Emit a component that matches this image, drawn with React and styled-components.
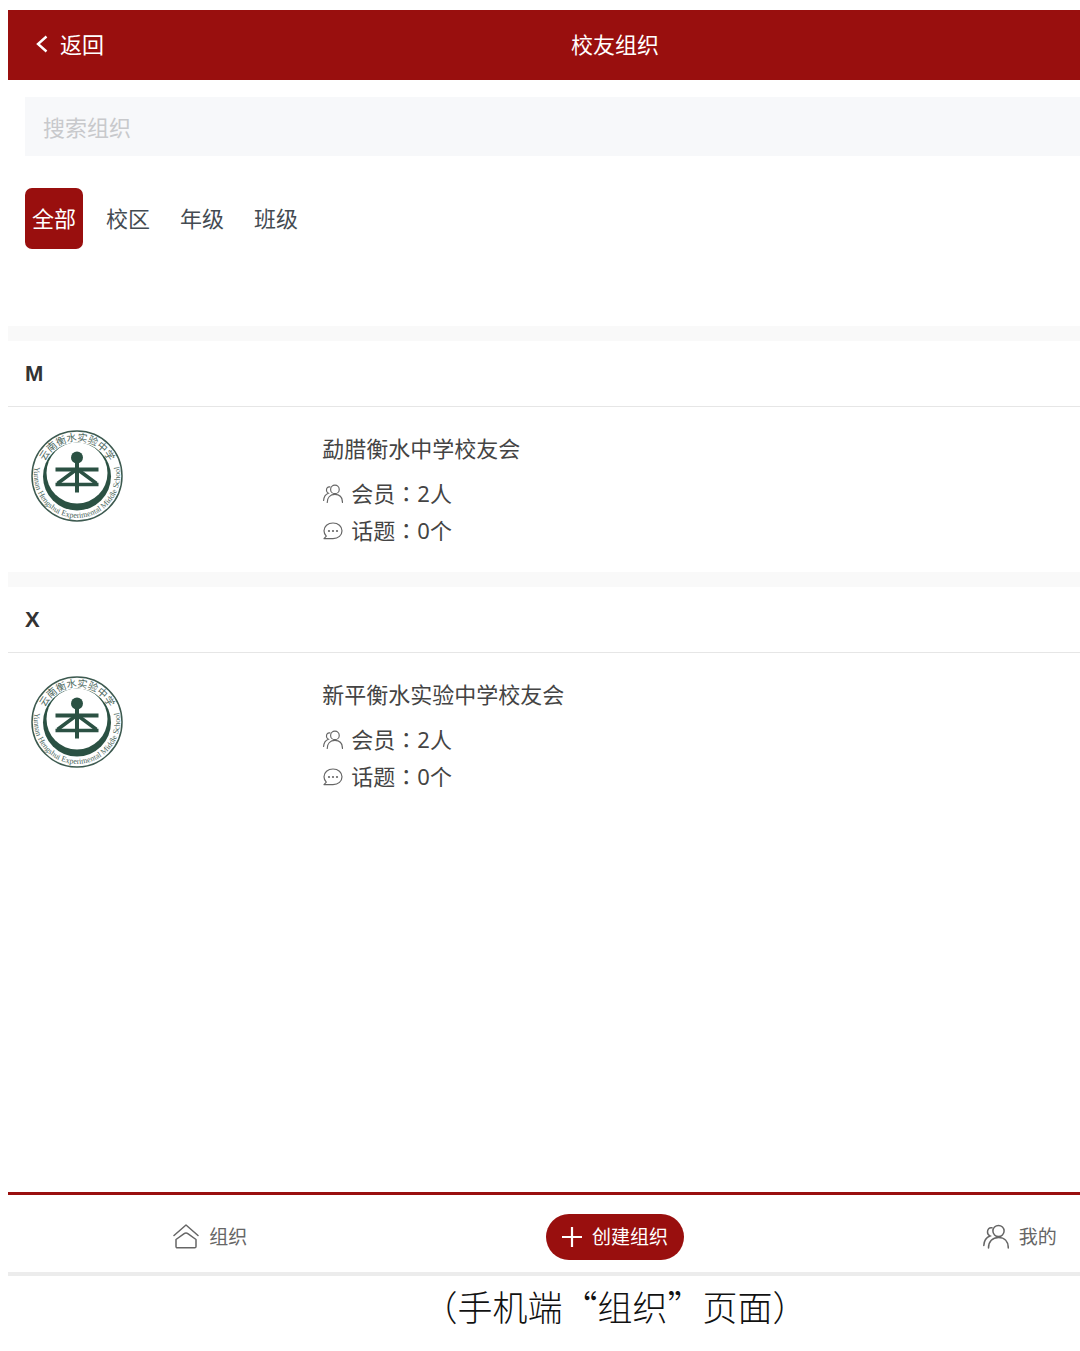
import React, { useState } from "react";
import styled, { createGlobalStyle } from "styled-components";

const GlobalStyle = createGlobalStyle`
  * {
    box-sizing: border-box;
  }
  body {
    margin: 0;
    background: #fff;
    color: #444;
    font-family: "Noto Sans", "Noto Sans CJK SC", sans-serif;
    font-size: 22px;
    line-height: 30px;
  }
  button, input {
    font: inherit;
  }
`;

const Page = styled.div`
  min-height: 100vh;
  padding-top: 10px;
  overflow: hidden;
  display: flex;
  flex-direction: column;
`;

/* the phone screen runs past the right edge of the window */
const Screen = styled.div`
  flex: 1;
  margin: 0 -142px 0 8px;
  display: flex;
  flex-direction: column;
`;

const Header = styled.header`
  height: 70px;
  padding: 0 28px 2px;
  background: #990f0e;
  color: #fff;
  display: grid;
  grid-template-columns: 1fr auto 1fr;
  align-items: center;
`;

const Back = styled.a`
  color: inherit;
  text-decoration: none;
  display: flex;
  align-items: center;
  gap: 12px;
`;

const Title = styled.h1`
  margin: 0;
  font-size: 22px;
  font-weight: 400;
`;

const Search = styled.input`
  height: 59px;
  margin: 17px 17px 0;
  padding: 0 18px;
  border: none;
  background: #f7f8fa;
  color: #444;
  &::placeholder {
    color: #c8c9cc;
    opacity: 1;
  }
`;

const Tabs = styled.div`
  display: flex;
  gap: 16px;
  padding: 32px 17px 77px;
`;

const Tab = styled.button`
  height: 61px;
  padding: 0 7px 2px;
  border: none;
  border-radius: 7px;
  background: ${({ $active }) => ($active ? "#990f0e" : "transparent")};
  color: ${({ $active }) => ($active ? "#fff" : "#444b52")};
  cursor: pointer;
`;

const Group = styled.section`
  border-top: 15px solid #f9f9f9;
`;

const Letter = styled.h2`
  height: 66px;
  margin: 0;
  padding: 0 17px;
  border-bottom: 1px solid #e6e6e6;
  font-family: "Liberation Sans", sans-serif;
  font-size: 22px;
  font-weight: 700;
  line-height: 66px;
  color: #333;
`;

const Item = styled.article`
  height: 165px;
  padding: 23px 8px 0 17px;
  display: grid;
  grid-template-columns: 1fr 3fr;
`;

const LogoCell = styled.div`
  padding-left: 6px;
`;

const Name = styled.h3`
  margin: 0 0 8px;
  font-size: 22px;
  font-weight: 400;
  line-height: 37px;
`;

const Stat = styled.p`
  margin: 0;
  line-height: 37px;
  display: flex;
  align-items: center;
  svg {
    margin: 0 8px 0 1px;
  }
`;

const Colon = styled.span`
  font-family: "Noto Sans", "Noto Sans CJK TC", sans-serif;
`;

const Nav = styled.nav`
  height: 84px;
  margin-top: auto;
  border-top: 3px solid #990f0e;
  border-bottom: 4px solid #ececec;
  display: grid;
  grid-template-columns: repeat(3, 1fr);
  place-items: center;
  padding-top: 6px;
  font-size: 19px;
`;

const NavLink = styled.a`
  color: #666;
  text-decoration: none;
  display: flex;
  align-items: center;
  gap: 10px;
`;

const Create = styled.button`
  height: 46px;
  padding: 0 16px;
  border: none;
  border-radius: 23px;
  background: #990f0e;
  color: #fff;
  display: flex;
  align-items: center;
  gap: 10px;
  cursor: pointer;
`;

const Caption = styled.p`
  margin: 0 -142px 0 8px;
  padding-bottom: 15px;
  color: #111;
  font-family: "Noto Sans CJK SC", sans-serif;
  font-size: 35px;
  font-weight: 300;
  line-height: 60px;
  text-align: center;
`;

const BackIcon = () => (
  <svg width="12" height="18" viewBox="0 0 12 18" fill="none" stroke="#fff" strokeWidth="2.4">
    <path d="M10.500 1.500 2 9l8.500 7.500" />
  </svg>
);

const PeopleIcon = ({ size, stroke }) => (
  <svg width={size} height={size} viewBox="0 0 26 26" fill="none" stroke="#666" strokeWidth={stroke} strokeLinecap="round">
    <circle cx="15.500" cy="7" r="5.600" />
    <path d="M5.500 24c0-6.500 4-10.500 10-10.500S25.300 17.500 25.300 24" />
    <path d="M9 3.800C6 3.300 4.500 5.300 4.500 8c0 2 1 3.300 2.500 4C3 13.500 1 17.500 .8 21.500" />
  </svg>
);

const ChatIcon = () => (
  <svg width="20" height="20" viewBox="0 0 20 20" fill="none" stroke="#666" strokeWidth="1.2">
    <path d="M1 17.600h9c5.300 0 9-3.300 9-7.800S15.200 2 10 2 1 5.500 1 9.800c0 2.200.9 4 2.300 5.400z" strokeLinejoin="round" />
    <g fill="#666" stroke="none">
      <circle cx="6" cy="10" r="1.100" />
      <circle cx="10" cy="10" r="1.100" />
      <circle cx="14" cy="10" r="1.100" />
    </g>
  </svg>
);

const HomeIcon = () => (
  <svg width="26" height="26" viewBox="0 0 26 26" fill="none" stroke="#666" strokeWidth="1.500" strokeLinecap="round" strokeLinejoin="round">
    <path d="M1 11.500 13 1l12 10.500" />
    <path d="M3 15.500 10.800 9.800q2.200-1.400 4.400 0L23 15.500v7c0 .8-.5 1.300-1.300 1.300H4.300c-.8 0-1.300-.5-1.300-1.300z" />
  </svg>
);

const PlusIcon = () => (
  <svg width="20" height="20" viewBox="0 0 20 20" stroke="#fff" strokeWidth="2.200">
    <path d="M10 0v20M0 10h20" />
  </svg>
);

const SchoolLogo = ({ id }) => (
  <svg width="92" height="92" viewBox="0 0 92 92" role="img" aria-label="校徽">
    <defs>
      <path id={`${id}-top`} d="M11 46a35 35 0 0 1 70 0" />
      <path id={`${id}-bottom`} d="M5 32a43 43 0 1 0 82 0" />
    </defs>
    <circle cx="46" cy="46" r="45" fill="#fff" stroke="#3d5a50" strokeWidth="1.500" />
    <circle cx="46" cy="46.500" r="34" fill="#2b5143" />
    <circle cx="46" cy="43" r="30.500" fill="#fff" />
    <circle cx="46" cy="27.500" r="6" fill="#2b5143" />
    <g fill="none" stroke="#2b5143">
      <path d="M24.500 39.500h43M46 33v29.500" strokeWidth="4" />
      <path d="M24.500 54.500h43" strokeWidth="3.500" />
      <path d="M44 40.500 26.500 53.500M48 40.500l17.500 13" strokeWidth="3.500" />
    </g>
    <text fontSize="10" fill="#4b665c" textAnchor="middle">
      <textPath href={`#${id}-top`} startOffset="50%">云南衡水实验中学</textPath>
    </text>
    <text fontFamily="Liberation Serif, serif" fontSize="8" fill="#4b665c" textAnchor="middle">
      <textPath href={`#${id}-bottom`} startOffset="50%">Yunnan Hengshui Experimental Middle School</textPath>
    </text>
  </svg>
);

const tabs = ["全部", "校区", "年级", "班级"];

const groups = [
  { letter: "M", name: "勐腊衡水中学校友会", members: 2, topics: 0 },
  { letter: "X", name: "新平衡水实验中学校友会", members: 2, topics: 0 },
];

const App = () => {
  const [active, setActive] = useState("全部");

  return (
    <>
      <GlobalStyle />
      <Page>
        <Screen>
          <Header>
            <Back href="#back">
              <BackIcon />
              返回
            </Back>
            <Title>校友组织</Title>
          </Header>
          <Search type="text" placeholder="搜索组织" aria-label="搜索组织" />
          <Tabs>
            {tabs.map((tab) => (
              <Tab key={tab} $active={tab === active} onClick={() => setActive(tab)}>
                {tab}
              </Tab>
            ))}
          </Tabs>
          {groups.map((group) => (
            <Group key={group.letter}>
              <Letter>{group.letter}</Letter>
              <Item>
                <LogoCell>
                  <SchoolLogo id={`logo-${group.letter}`} />
                </LogoCell>
                <div>
                  <Name>{group.name}</Name>
                  <Stat>
                    <PeopleIcon size={20} stroke={1.5} />
                    会员<Colon>：</Colon>
                    {group.members}人
                  </Stat>
                  <Stat>
                    <ChatIcon />
                    话题<Colon>：</Colon>
                    {group.topics}个
                  </Stat>
                </div>
              </Item>
            </Group>
          ))}
          <Nav>
            <NavLink href="#groups">
              <HomeIcon />
              组织
            </NavLink>
            <Create>
              <PlusIcon />
              创建组织
            </Create>
            <NavLink href="#mine">
              <PeopleIcon size={26} stroke={1.5} />
              我的
            </NavLink>
          </Nav>
        </Screen>
        <Caption>（手机端“组织”页面）</Caption>
      </Page>
    </>
  );
};

export default App;
